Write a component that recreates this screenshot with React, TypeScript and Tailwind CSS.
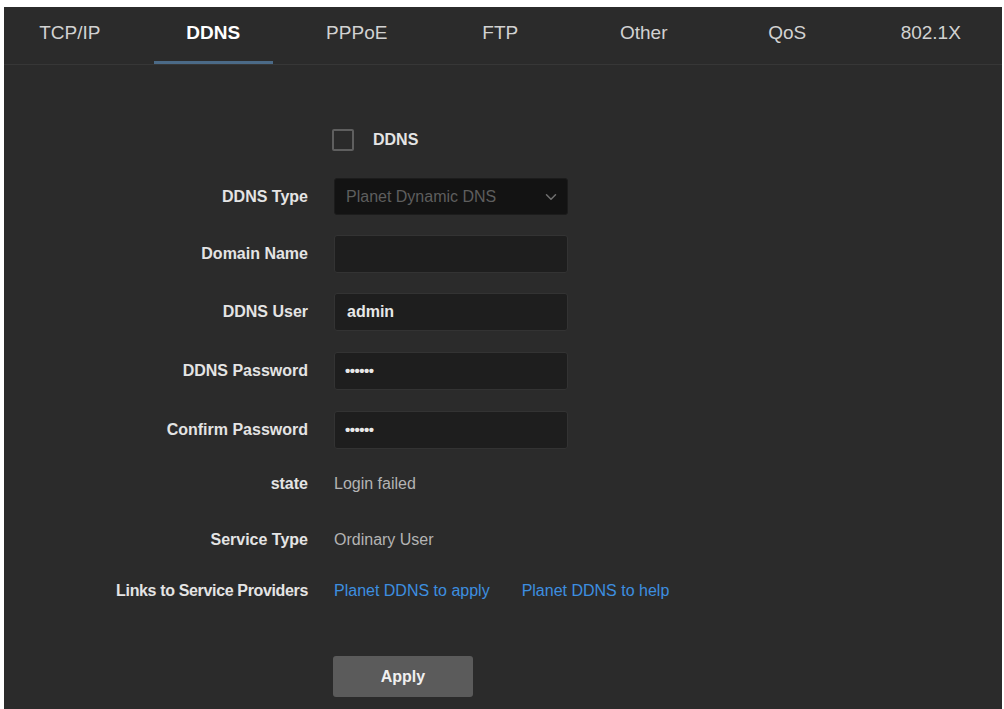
import { ChevronDown } from 'lucide-react'

const tabs = ['TCP/IP', 'DDNS', 'PPPoE', 'FTP', 'Other', 'QoS', '802.1X']

function Row({ label, className, labelClass = '', children }: { label: string; className: string; labelClass?: string; children: React.ReactNode }) {
  return (
    <div className={`flex items-center ${className}`}>
      <div className={`w-[304px] shrink-0 text-right text-[16px] font-bold text-[#e4e4e4] ${labelClass}`}>{label}</div>
      <div className="ml-[26px] flex items-center">{children}</div>
    </div>
  )
}

export default function App() {
  return (
    <main
      className="min-h-screen bg-white pt-[7px] pl-[4px] pr-[2px]"
      style={{ fontFamily: '"Liberation Sans", Arial, sans-serif' }}
    >
      <div className="min-h-[702px] overflow-hidden bg-[#2b2b2b]">

        <nav className="flex border-b border-[#373737]">
          <div className="-ml-[6px] flex">
            {tabs.map((t) => (
              <div key={t} className="flex h-[57px] w-[143.5px] flex-col items-center">
                <span
                  className={
                    t === 'DDNS'
                      ? 'pt-[12px] text-[19px] font-bold text-white'
                      : 'pt-[12px] text-[19px] text-[#d2d2d2]'
                  }
                >
                  {t}
                </span>
                {t === 'DDNS' && <div className="mt-auto h-[3px] w-[119px] bg-[#4b6a87]" />}
              </div>
            ))}
          </div>
        </nav>

        <section className="flex flex-col">
          <div className="ml-[328px] mt-[64px] flex h-[22px] items-center">
            <div className="h-[22px] w-[22px] rounded-[2px] border-2 border-[#5f5f5f]" />
            <span className="ml-[19px] text-[16px] font-bold text-[#e4e4e4]">DDNS</span>
          </div>

          <Row label="DDNS Type" className="mt-[27px] h-[37px]">
            <div className="flex h-[37px] w-[234px] items-center justify-between rounded-[3px] border border-[#1c1c1c] bg-[#131313] pl-[11px] pr-[7px]">
              <span className="text-[16px] text-[#5e5e5e]">Planet Dynamic DNS</span>
              <ChevronDown className="h-[18px] w-[18px] text-[#707070]" strokeWidth={2} />
            </div>
          </Row>

          <Row label="Domain Name" className="mt-[20px] h-[38px]">
            <div className="h-[38px] w-[234px] rounded-[3px] border border-[#333] bg-[#1e1e1e]" />
          </Row>

          <Row label="DDNS User" className="mt-[20px] h-[38px]">
            <div className="flex h-[38px] w-[234px] items-center rounded-[3px] border border-[#333] bg-[#1e1e1e] pl-[12px]">
              <span className="text-[16px] font-bold text-[#e8e8e8]">admin</span>
            </div>
          </Row>

          <Row label="DDNS Password" className="mt-[21px] h-[38px]">
            <div className="flex h-[38px] w-[234px] items-center rounded-[3px] border border-[#333] bg-[#1e1e1e] pl-[10px]">
              <span className="text-[15px] font-bold tracking-[-0.5px] text-[#e8e8e8]">••••••</span>
            </div>
          </Row>

          <Row label="Confirm Password" className="mt-[21px] h-[38px]">
            <div className="flex h-[38px] w-[234px] items-center rounded-[3px] border border-[#333] bg-[#1e1e1e] pl-[10px]">
              <span className="text-[15px] font-bold tracking-[-0.5px] text-[#e8e8e8]">••••••</span>
            </div>
          </Row>

          <Row label="state" className="mt-[25px] h-[20px]">
            <span className="text-[16px] text-[#b4b4b4]">Login failed</span>
          </Row>

          <Row label="Service Type" className="mt-[36px] h-[20px]">
            <span className="text-[16px] text-[#b4b4b4]">Ordinary User</span>
          </Row>

          <Row label="Links to Service Providers" labelClass="tracking-[-0.35px]" className="mt-[31px] h-[20px]">
            <a className="text-[16px] text-[#3d8fe0]">Planet DDNS to apply</a>
            <a className="ml-[32px] text-[16px] text-[#3d8fe0]">Planet DDNS to help</a>
          </Row>

          <div className="ml-[329px] mt-[55px]">
            <button className="h-[41px] w-[140px] rounded-[3px] bg-[#5b5b5b] text-[16px] font-bold text-[#f0f0f0]">
              Apply
            </button>
          </div>
        </section>

      </div>
    </main>
  )
}
